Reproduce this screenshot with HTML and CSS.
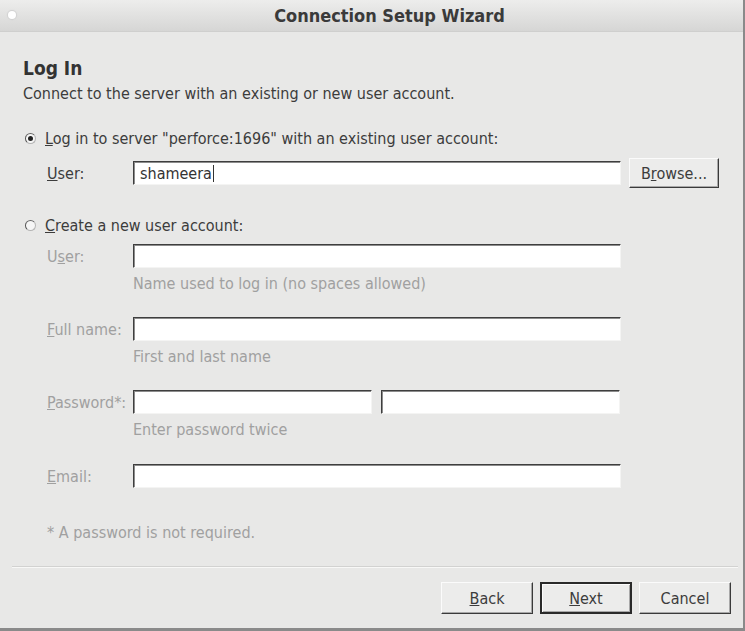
FILE: index.html
```html
<!DOCTYPE html>
<html>
<head>
<meta charset="utf-8">
<link rel="stylesheet" href="styles.css">
</head>
<body>
<div class="window">
  <div class="titlebar">
    <span class="dot"></span>
    <span class="title">Connection Setup Wizard</span>
  </div>
  <div class="content">
    <h1 class="heading">Log In</h1>
    <p class="subtitle">Connect to the server with an existing or new user account.</p>

    <div class="radio-row first">
      <span class="radio checked"></span>
      <span class="radio-label"><u>L</u>og in to server "perforce:1696" with an existing user account:</span>
    </div>
    <div class="field-row user-row">
      <span class="label"><u>U</u>ser:</span>
      <div class="input focus"><span class="value">shameera</span><span class="caret"></span></div>
      <button class="btn browse">B<u>r</u>owse...</button>
    </div>

    <div class="radio-row second">
      <span class="radio"></span>
      <span class="radio-label"><u>C</u>reate a new user account:</span>
    </div>

    <div class="field-row disabled r1">
      <span class="label">U<u>s</u>er:</span>
      <div class="input"></div>
    </div>
    <div class="hint">Name used to log in (no spaces allowed)</div>

    <div class="field-row disabled r2">
      <span class="label"><u>F</u>ull name:</span>
      <div class="input"></div>
    </div>
    <div class="hint">First and last name</div>

    <div class="field-row disabled r2">
      <span class="label"><u>P</u>assword*:</span>
      <div class="pair">
        <div class="input"></div>
        <div class="input"></div>
      </div>
    </div>
    <div class="hint">Enter password twice</div>

    <div class="field-row disabled r3">
      <span class="label"><u>E</u>mail:</span>
      <div class="input"></div>
    </div>

    <div class="note">* A password is not required.</div>
  </div>
  <div class="separator"></div>
  <div class="footer">
    <button class="btn"><u>B</u>ack</button>
    <button class="btn default"><u>N</u>ext</button>
    <button class="btn">Cancel</button>
  </div>
</div>
</body>
</html>
```

FILE: styles.css
```css
* { box-sizing: border-box; }
html, body {
  margin: 0;
  padding: 0;
  background: #e8e8e7;
}
body {
  font-family: "DejaVu Sans", sans-serif;
  font-stretch: condensed;
  font-size: 16px;
  color: #3c3c3c;
}
.window {
  width: 745px;
  height: 631px;
  background: #e8e8e7;
  border-right: 2px solid #8a8a8a;
  border-bottom: 3px solid #8a8a8a;
  display: flex;
  flex-direction: column;
}
.titlebar {
  height: 32px;
  flex: none;
  background: linear-gradient(#ededec, #d6d6d5);
  border-bottom: 1px solid #cfcfce;
  position: relative;
  display: flex;
  align-items: center;
  justify-content: center;
}
.dot {
  position: absolute;
  left: 8px;
  top: 11px;
  width: 8px;
  height: 8px;
  border-radius: 50%;
  background: #fff;
  box-shadow: 0 0 1px 1px #d0d0d0;
}
.title {
  font-weight: bold;
  font-size: 18px;
  color: #3a3a3a;
  margin-left: 36px;
}
.content {
  padding: 26px 0 0 23px;
  flex: 1;
}
.heading {
  margin: 0 0 6px;
  font-size: 19px;
  line-height: 20px;
  font-weight: bold;
  color: #333;
}
.subtitle {
  margin: 0;
  line-height: 20px;
}
.radio-row {
  display: flex;
  align-items: center;
  height: 20px;
}
.radio-row.first { margin-top: 24px; }
.radio-row.second { margin-top: 27px; }
.radio {
  width: 11px;
  height: 11px;
  border-radius: 50%;
  background: #f6f6f6;
  border: 1px solid #b5b5b5;
  border-left-color: #555;
  border-top-color: #666;
  margin-left: 2px;
  margin-right: 9px;
  position: relative;
  flex: none;
}
.radio.checked::after {
  content: "";
  position: absolute;
  left: 2px;
  top: 2px;
  width: 5px;
  height: 5px;
  border-radius: 50%;
  background: #222;
}
.field-row {
  display: flex;
  align-items: center;
  padding-left: 24px;
}
.user-row {
  margin-top: 10px;
  height: 30px;
}
.label {
  width: 86px;
  flex: none;
}
.input {
  width: 488px;
  height: 24px;
  background: #fff;
  border: 1px solid;
  border-color: #3e3e3e #f4f4f3 #f4f4f3 #3e3e3e;
  box-shadow: inset 1px 1px 0 #8c8c8c;
  display: flex;
  align-items: center;
  padding-left: 6px;
  color: #333;
  flex: none;
}
.caret {
  width: 1px;
  height: 17px;
  background: #333;
  margin-left: 1px;
}
.pair {
  display: flex;
  gap: 9px;
  width: 488px;
}
.pair .input { width: 239px; }
.disabled .label { color: #a0a0a0; }
.r1 { margin-top: 9px; }
.r2 { margin-top: 23px; }
.r3 { margin-top: 24px; }
.hint {
  margin-top: 6px;
  padding-left: 110px;
  line-height: 20px;
  color: #a0a0a0;
}
.note {
  margin-top: 35px;
  padding-left: 24px;
  line-height: 20px;
  color: #a0a0a0;
}
.btn {
  font-family: inherit;
  font-stretch: condensed;
  font-size: 16px;
  color: #3c3c3c;
  background: #ececeb;
  border: 1px solid;
  border-color: #fbfbfb #3a3a3a #3a3a3a #fbfbfb;
  box-shadow: inset -1px -1px 0 #a8a8a8;
  height: 32px;
  width: 92px;
  padding: 0;
}
.browse {
  margin-left: 8px;
  width: 90px;
  height: 30px;
}
.btn.default {
  border: 2px solid #2a2a2a;
  box-shadow: inset 1px 1px 0 #fbfbfb, inset -1px -1px 0 #a8a8a8;
}
.separator {
  margin: 0 5px 0 12px;
  height: 2px;
  border-top: 1px solid #d2d2d1;
  border-bottom: 1px solid #f8f8f7;
  flex: none;
}
.footer {
  display: flex;
  justify-content: flex-end;
  gap: 7px;
  padding: 14px 12px 14px 0;
  flex: none;
}
```
